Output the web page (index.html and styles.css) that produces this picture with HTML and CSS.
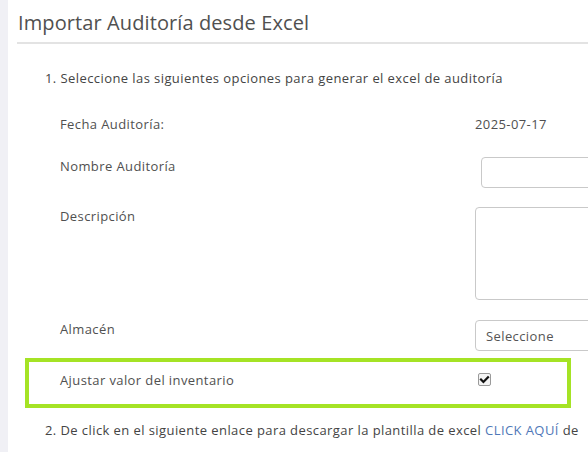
FILE: index.html
```html
<!DOCTYPE html>
<html lang="es">
<head>
<meta charset="utf-8">
<title>Importar Auditoría desde Excel</title>
<link rel="stylesheet" href="styles.css">
</head>
<body>
<div class="strip"></div>
<main class="panel">
  <h1 class="title">Importar Auditoría desde Excel</h1>
  <p class="step">1. Seleccione las siguientes opciones para generar el excel de auditoría</p>
  <div class="form">
    <div class="row row-date">
      <div class="label">Fecha Auditoría:</div>
      <div class="value">2025-07-17</div>
    </div>
    <div class="row row-name">
      <div class="label">Nombre Auditoría</div>
      <div class="value"><input class="input input-name" type="text"></div>
    </div>
    <div class="row row-desc">
      <div class="label">Descripción</div>
      <div class="value"><textarea class="input textarea"></textarea></div>
    </div>
    <div class="row row-store">
      <div class="label">Almacén</div>
      <div class="value"><div class="input select">Seleccione</div></div>
    </div>
    <div class="row row-adjust highlight">
      <div class="label">Ajustar valor del inventario</div>
      <div class="value">
        <span class="checkbox"><svg viewBox="0 0 13 13" width="13" height="13"><path d="M3 6.6 L5.4 9 L10 4.2" fill="none" stroke="#111" stroke-width="2.2" stroke-linecap="square"/></svg></span>
      </div>
    </div>
  </div>
  <p class="step step-2">2. De click en el siguiente enlace para descargar la plantilla de excel <a class="link" href="#">CLICK AQUÍ</a> de</p>
</main>
</body>
</html>
```
FILE: styles.css
```css
* { box-sizing: border-box; }
html, body { margin: 0; padding: 0; }
body {
  display: flex;
  width: 588px;
  height: 452px;
  overflow: hidden;
  background: #fff;
  font-family: "Open Sans", "DejaVu Sans", sans-serif;
  color: #555;
}
.strip {
  width: 8px;
  flex: none;
  background: #f0f0f5;
}
.panel {
  flex: 1;
  padding-left: 9px;
  white-space: nowrap;
  min-width: 0;
  overflow: hidden;
}
.title {
  margin: 0;
  padding: 9px 0 0 1px;
  height: 44px;
  font-size: 20px;
  font-weight: 400;
  line-height: 28px;
  letter-spacing: 0.1px;
  color: #505050;
  border-bottom: 2px solid #e3e3e3;
}
.step {
  margin: 25px 0 0 28px;
  font-size: 13px;
  line-height: 18px;
  letter-spacing: 0.42px;
  color: #444;
}
.step-2 { margin-top: 13px; }
.link { color: #4f78b8; text-decoration: none; }
.form {
  margin-left: 8px;
  width: 546px;
  display: flex;
  flex-direction: column;
}
.row {
  display: grid;
  grid-template-columns: 415px 1fr;
  padding-left: 35px;
  font-size: 13px;
  line-height: 18px;
  letter-spacing: 0.4px;
  color: #505050;
}
.row-date { margin-top: 28px; }
.row-name { margin-top: 24px; }
.row-desc { margin-top: 19px; }
.row-store { margin-top: 20px; }
.row-adjust { margin-top: 7px; }
.input {
  display: block;
  width: 200px;
  height: 31px;
  border: 1px solid #c9c9c9;
  border-radius: 4px;
  background: #fff;
  font: inherit;
}
.input-name { margin-left: 6px; }
.textarea { height: 93px; resize: none; }
.select {
  padding: 6px 10px;
  color: #555;
}
.highlight {
  height: 50px;
  padding-top: 13px;
  outline: 4px solid #a5e325;
  outline-offset: -4px;
}
.checkbox {
  display: block;
  margin: 2px 0 0 3px;
  width: 13px;
  height: 13px;
  border: 1px solid #9a9a9a;
  border-radius: 2px;
  background: #f4f4f4;
  position: relative;
}
.checkbox svg { position: absolute; left: -1px; top: -1px; }
```
